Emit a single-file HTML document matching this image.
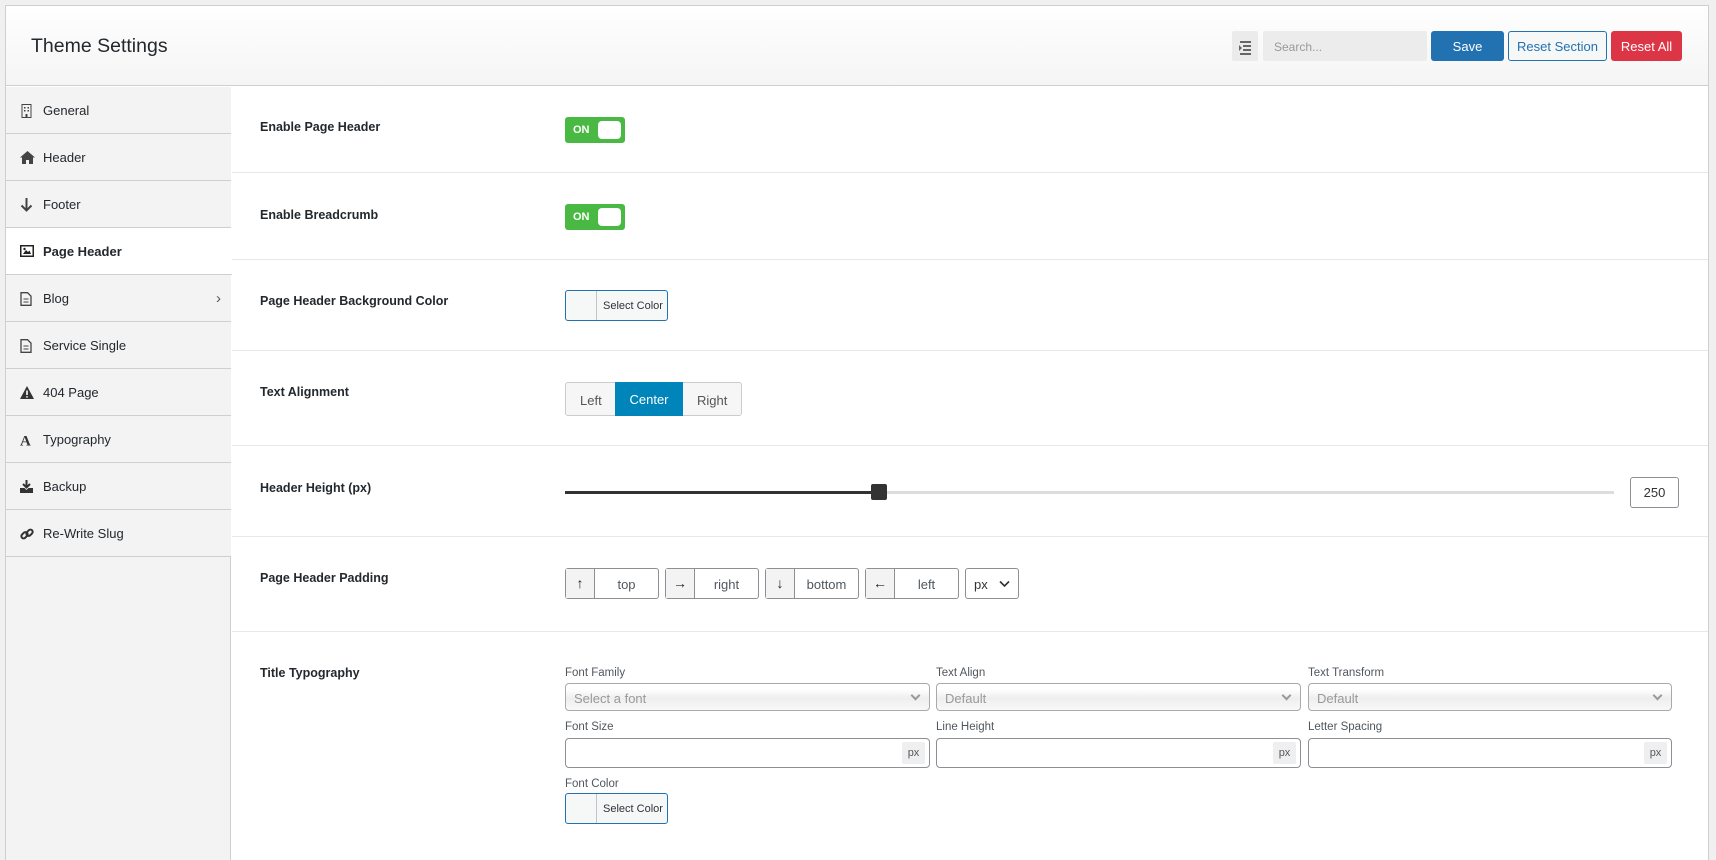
<!DOCTYPE html>
<html style="height:860px;overflow:hidden"><head><meta charset="utf-8"><style>
*{box-sizing:border-box;margin:0;padding:0}
body{width:1716px;height:860px;background:#f0f0f1;font-family:"Liberation Sans",sans-serif;color:#23282d;position:relative;overflow:hidden}
.a{position:absolute}
#wrap{left:5px;top:5px;width:1704px;height:855px;border:1px solid #ccd0d4;border-bottom:none;background:#fff}
#hdr{left:6px;top:6px;width:1702px;height:80px;background:linear-gradient(#fefefe,#f5f5f5);border-bottom:1px solid #ccd0d4}
#side{left:6px;top:87px;width:225px;height:773px;background:#f3f3f3;border-right:1px solid #ccd0d4}
.it{position:absolute;left:6px;width:225px;height:47px;border-bottom:1px solid #ccd0d4;background:#f3f3f3;font-size:13px;color:#23282d;padding-left:37px;line-height:47px}
.it.on{background:#fff;width:226px;font-weight:bold}
.it svg{position:absolute;left:14px;top:17px}
.row{position:absolute;left:232px;width:1476px;border-bottom:1px solid #e8e8e8}
.lab{position:absolute;left:260px;font-size:12.5px;font-weight:bold;color:#23282d}
.tg{position:absolute;left:565px;width:60px;height:26px;background:#4ab944;border-radius:3px}
.tg b{position:absolute;left:8px;top:7px;color:#fff;font-size:11px}
.tg i{position:absolute;right:4px;top:4px;width:23px;height:18px;background:#fff;border-radius:4px}
.sc{position:absolute;left:565px;width:103px;height:31px;border:1px solid #2271b1;border-radius:3px;background:#f6f7f7;font-size:11px;color:#2c3338}
.sc i{position:absolute;left:0;top:0;width:31px;height:29px;border-right:1px solid #c3c4c7}
.sc span{position:absolute;left:37px;top:9px}
.bx{position:absolute;top:568px;height:31px;border:1px solid #8c8f94;border-radius:3px;background:#fff;font-size:13px;color:#50575e}
.bx i{position:absolute;left:0;top:0;width:29px;height:29px;background:#f3f3f3;border-right:1px solid #8c8f94;font-style:normal;text-align:center;line-height:28px;color:#222;font-weight:bold;font-size:14px}
.bx span{position:absolute;left:29px;right:0;top:8px;text-align:center}
.sl{font-size:11.5px;color:#50575e;position:absolute}
.sel{position:absolute;height:28px;border:1px solid #aaa;border-radius:4px;background:linear-gradient(#fff 20%,#eee 55%,#f8f8f8);font-size:13px;color:#999;padding:7px 8px}
.sel:after{content:"";position:absolute;right:10px;top:8px;width:5px;height:5px;border-right:2px solid #999;border-bottom:2px solid #999;transform:rotate(45deg)}
.inp{position:absolute;height:30px;border:1px solid #8c8f94;border-radius:4px;background:#fff}
.inp b{position:absolute;right:4px;top:3px;width:23px;height:22px;background:#efefef;font-weight:normal;font-size:11px;color:#50575e;text-align:center;line-height:22px;border-radius:2px}
</style></head><body>
<div class="a" id="wrap"></div>
<div class="a" id="hdr"></div>
<div class="a" style="left:31px;top:35px;font-size:19.5px;color:#23282d">Theme Settings</div>
<div class="a" style="left:1232px;top:31px;width:26px;height:30px;background:#ebebeb;border-radius:2px"><svg width="26" height="30"><g fill="#666"><rect x="8" y="10" width="11" height="2"/><rect x="11" y="14" width="8" height="2"/><rect x="11" y="18" width="8" height="2"/><rect x="8" y="22" width="11" height="2"/><polygon points="7,14 10,17 7,20"/></g></svg></div>
<div class="a" style="left:1263px;top:31px;width:164px;height:30px;background:#ececec;border-radius:2px;font-size:12px;color:#999;padding:9px 11px">Search...</div>
<div class="a" style="left:1431px;top:31px;width:73px;height:30px;background:#2271b1;border-radius:3px;color:#fff;font-size:13px;text-align:center;line-height:31px">Save</div>
<div class="a" style="left:1508px;top:31px;width:99px;height:30px;border:1px solid #2271b1;background:#f6f7f7;border-radius:3px;color:#2271b1;font-size:13px;text-align:center;line-height:29px">Reset Section</div>
<div class="a" style="left:1611px;top:31px;width:71px;height:30px;background:#dc3545;border-radius:3px;color:#fff;font-size:13px;text-align:center;line-height:31px">Reset All</div>

<div class="a" id="side"></div>
<div class="it" style="top:87px"><svg width="13" height="14"><rect x="2" y="0.5" width="9" height="13" fill="none" stroke="#444"/><g fill="#444"><rect x="4" y="3" width="1.5" height="1.5"/><rect x="7.5" y="3" width="1.5" height="1.5"/><rect x="4" y="6" width="1.5" height="1.5"/><rect x="7.5" y="6" width="1.5" height="1.5"/><rect x="5.5" y="10" width="2" height="3.5"/></g></svg>General</div>
<div class="it" style="top:134px"><svg width="15" height="13"><path d="M7.5 0L0 6.5h2V13h4V9h3v4h4V6.5h2z" fill="#444"/></svg>Header</div>
<div class="it" style="top:181px"><svg width="13" height="14"><path d="M6.5 0v12M1.5 7.5l5 5 5-5" stroke="#444" stroke-width="2" fill="none"/></svg>Footer</div>
<div class="it on" style="top:228px"><svg width="14" height="12"><rect x="0.75" y="0.75" width="12.5" height="10.5" fill="none" stroke="#222" stroke-width="1.5"/><path d="M3 9l3-4 2 2 1.5-1.5L11 9z" fill="#222"/><circle cx="4.5" cy="4" r="1.2" fill="#222"/></svg>Page Header</div>
<div class="it" style="top:275px"><svg width="12" height="14"><path d="M1 .7h6.5L11 4.2v9.1H1z" fill="none" stroke="#444" stroke-width="1.3"/><path d="M3.5 7h5M3.5 10h5" stroke="#444"/></svg>Blog<span style="position:absolute;right:10px;top:0;font-size:15px;color:#555">›</span></div>
<div class="it" style="top:322px"><svg width="12" height="14"><path d="M1 .7h6.5L11 4.2v9.1H1z" fill="none" stroke="#444" stroke-width="1.3"/><path d="M3.5 7h5M3.5 10h5" stroke="#444"/></svg>Service Single</div>
<div class="it" style="top:369px"><svg width="14" height="13"><path d="M7 0L14 13H0z" fill="#333"/><path d="M7 4.5v4.5M7 10.3v1.3" stroke="#fff" stroke-width="1.6"/></svg>404 Page</div>
<div class="it" style="top:416px"><svg width="14" height="13"><text x="0" y="12.5" font-family="Liberation Serif" font-weight="bold" font-size="15" fill="#333">A</text></svg>Typography</div>
<div class="it" style="top:463px"><svg width="13" height="13"><path d="M6.5 0v7M3 4l3.5 3.5L10 4" stroke="#333" stroke-width="2" fill="none"/><path d="M0 8h4.5l2 2 2-2H13v5H0z" fill="#333"/></svg>Backup</div>
<div class="it" style="top:510px"><svg width="14" height="14"><g fill="none" stroke="#333" stroke-width="2"><rect x="1" y="6" width="7" height="4.5" rx="2.2" transform="rotate(-45 4.5 8.2)"/><rect x="6" y="3.5" width="7" height="4.5" rx="2.2" transform="rotate(-45 9.5 5.7)"/></g></svg>Re-Write Slug</div>

<div class="row" style="top:86px;height:87px"></div>
<div class="row" style="top:173px;height:87px"></div>
<div class="row" style="top:260px;height:91px"></div>
<div class="row" style="top:351px;height:95px"></div>
<div class="row" style="top:446px;height:91px"></div>
<div class="row" style="top:537px;height:95px"></div>

<div class="lab" style="top:120px">Enable Page Header</div>
<div class="tg" style="top:117px"><b>ON</b><i></i></div>
<div class="lab" style="top:208px">Enable Breadcrumb</div>
<div class="tg" style="top:204px"><b>ON</b><i></i></div>
<div class="lab" style="top:294px">Page Header Background Color</div>
<div class="sc" style="top:290px"><i></i><span>Select Color</span></div>
<div class="lab" style="top:385px">Text Alignment</div>
<div class="a" style="left:565px;top:382px;width:177px;height:34px;border:1px solid #ccc;border-radius:3px;background:#f6f6f6;font-size:13px;color:#555">
<span class="a" style="left:14px;top:10px">Left</span>
<div class="a" style="left:49px;top:-1px;width:68px;height:34px;background:#0085ba;color:#fff;text-align:center;line-height:35px">Center</div>
<span class="a" style="left:131px;top:10px">Right</span></div>
<div class="lab" style="top:481px">Header Height (px)</div>
<div class="a" style="left:565px;top:491px;width:1049px;height:3px;background:#ddd"></div>
<div class="a" style="left:565px;top:491px;width:314px;height:3px;background:#333"></div>
<div class="a" style="left:871px;top:484px;width:16px;height:16px;background:#333;border-radius:2px"></div>
<div class="a" style="left:1630px;top:477px;width:49px;height:31px;border:1px solid #8c8f94;border-radius:3px;font-size:13px;color:#333;text-align:center;line-height:30px">250</div>
<div class="lab" style="top:571px">Page Header Padding</div>
<div class="bx" style="left:565px;width:94px"><i>↑</i><span>top</span></div>
<div class="bx" style="left:665px;width:94px"><i>→</i><span>right</span></div>
<div class="bx" style="left:765px;width:94px"><i>↓</i><span>bottom</span></div>
<div class="bx" style="left:865px;width:94px"><i>←</i><span>left</span></div>
<div class="bx" style="left:965px;width:54px;color:#333"><span style="left:8px;text-align:left">px</span><svg class="a" style="left:33px;top:11px" width="11" height="8"><path d="M1 1.5l4.5 4.5L10 1.5" stroke="#333" stroke-width="1.6" fill="none"/></svg></div>

<div class="lab" style="top:666px">Title Typography</div>
<div class="sl" style="left:565px;top:667px">Font Family</div>
<div class="sl" style="left:936px;top:667px">Text Align</div>
<div class="sl" style="left:1308px;top:667px">Text Transform</div>
<div class="sel" style="left:565px;top:683px;width:365px">Select a font</div>
<div class="sel" style="left:936px;top:683px;width:365px">Default</div>
<div class="sel" style="left:1308px;top:683px;width:364px">Default</div>
<div class="sl" style="left:565px;top:721px">Font Size</div>
<div class="sl" style="left:936px;top:721px">Line Height</div>
<div class="sl" style="left:1308px;top:721px">Letter Spacing</div>
<div class="inp" style="left:565px;top:738px;width:365px"><b>px</b></div>
<div class="inp" style="left:936px;top:738px;width:365px"><b>px</b></div>
<div class="inp" style="left:1308px;top:738px;width:364px"><b>px</b></div>
<div class="sl" style="left:565px;top:778px">Font Color</div>
<div class="sc" style="top:793px"><i></i><span>Select Color</span></div>
</body></html>
